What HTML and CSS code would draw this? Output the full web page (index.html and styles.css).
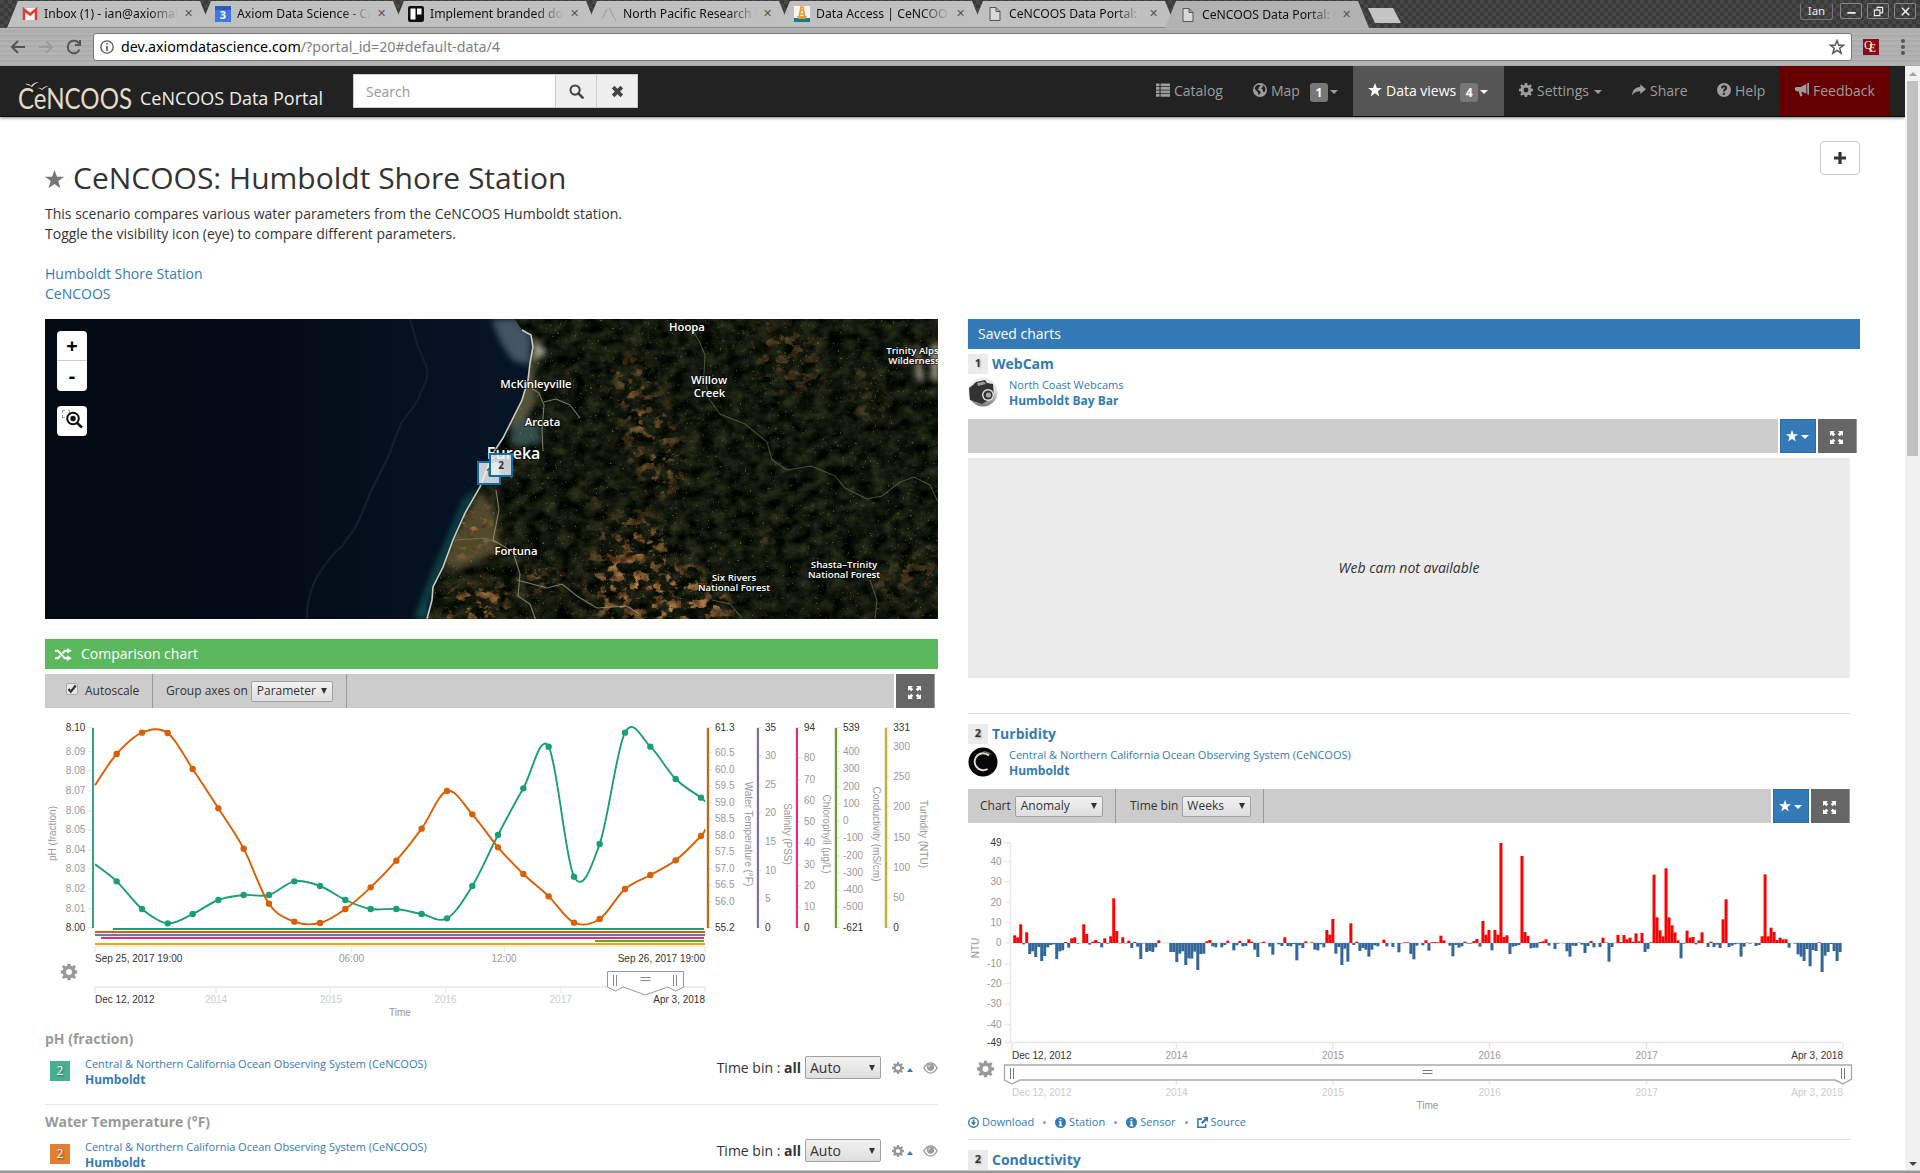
FILE: index.html
```html
<!DOCTYPE html>
<html lang="en">
<head>
<meta charset="utf-8">
<title>CeNCOOS Data Portal</title>
<link rel="stylesheet" href="styles.css">
</head>
<body>
<svg class="defs" width="0" height="0">
  <symbol id="star" viewBox="0 0 16 16"><path d="M8 0l2.100 5.700H16l-4.800 3.600L13 15.300 8 11.700l-5 3.600 1.800-6L0 5.700h5.900z"/></symbol>
  <symbol id="gear" viewBox="0 0 16 16"><path fill-rule="evenodd" d="M6.700 0h2.600l.4 2.200 1.500.6L13 1.500 14.600 3.100l-1.300 1.800.6 1.500 2.100.3v2.600l-2.100.4-.6 1.500 1.300 1.800L13 14.600l-1.800-1.300-1.500.6-.4 2.100H6.700l-.4-2.100-1.500-.6L3 14.600 1.400 13l1.300-1.800-.6-1.500L0 9.300V6.700l2.100-.3.6-1.500L1.400 3.100 3 1.500l1.800 1.300 1.500-.6zM8 5.200a2.800 2.800 0 100 5.600 2.800 2.800 0 000-5.600z"/></symbol>
  <symbol id="list" viewBox="0 0 16 16"><path d="M0 .5h4v3.300H0zM5.200.5H16v3.300H5.200zM0 4.500h4v3.300H0zM5.200 4.500H16v3.300H5.200zM0 8.500h4v3.300H0zM5.200 8.500H16v3.300H5.200zM0 12.500h4v3.300H0zM5.200 12.500H16v3.300H5.200z"/></symbol>
  <symbol id="globe" viewBox="0 0 16 16"><path fill-rule="evenodd" d="M8 0a8 8 0 100 16A8 8 0 008 0zM3.200 3.500L6 2l2.500.3L8 4 6.500 4.500 7 6 5 7.500l3 1.500 1 2-2.500 3-1-3.500L3 8 2 6zM10.500 2l2.800 2 1 3.500-1.300 3-1.500-.5-.5-2.500-1.500-1L10 5l1.500-.5z"/></symbol>
  <symbol id="share" viewBox="0 0 16 16"><path d="M9.500 1.500L16 7l-6.500 5.500V9.300C5 9.200 2.500 10.500 0 14 .5 8.500 3.500 5 9.500 4.700z"/></symbol>
  <symbol id="help" viewBox="0 0 16 16"><path fill-rule="evenodd" d="M8 0a8 8 0 100 16A8 8 0 008 0zM6.700 11h2.400v2.300H6.700zM4.600 6C4.700 4 6 2.700 8.100 2.700c2 0 3.500 1.200 3.500 3 0 1.200-.6 1.900-1.500 2.500-.8.5-1 .8-1 1.600H6.800c0-1.700.5-2.400 1.500-3 .6-.4.800-.6.800-1s-.3-.9-1-.9c-.8 0-1.100.5-1.200 1.300z"/></symbol>
  <symbol id="horn" viewBox="0 0 16 16"><path d="M14 0h2v13h-2zM13 1v11L7.500 10v.2l1 4.300-2.500.8-1.800-5.800H1.500L0 8V5.500L1.500 4.500h5z"/></symbol>
  <symbol id="full" viewBox="0 0 16 16"><path d="M0 0h6L4.200 1.800 6.500 4 4 6.500 1.800 4.200 0 6zM10 0h6v6l-1.800-1.800L12 6.500 9.500 4l2.300-2.200zM0 10l1.800 1.800L4 9.500 6.500 12l-2.300 2.200L6 16H0zM16 10v6h-6l1.800-1.800L9.500 12 12 9.500l2.200 2.300z"/></symbol>
  <symbol id="shuffle" viewBox="0 0 18 14"><path fill="none" stroke="currentColor" stroke-width="2.200" d="M0 3h3l7.500 8H14M0 11h3l2.500-2.700M8 5.700L10.500 3H14"/><path d="M13 0l5 3-5 3zM13 8l5 3-5 3z"/></symbol>
  <symbol id="search" viewBox="0 0 16 16"><circle cx="6.500" cy="6.500" r="4.900" fill="none" stroke="currentColor" stroke-width="2.200"/><path d="M10 10l4.500 4.500" stroke="currentColor" stroke-width="2.800" stroke-linecap="round"/></symbol>
  <symbol id="page" viewBox="0 0 11 14"><path fill="#d8d8d8" stroke="#555" d="M.5.5h6l4 4v9H.5zM6.500.5v4h4"/></symbol>
  <symbol id="eye" viewBox="0 0 16 13"><path fill="none" stroke="currentColor" stroke-width="1.500" d="M.8 6.500C3 2.700 5.500 1 8 1s5 1.700 7.200 5.500C13 10.200 10.500 12 8 12S3 10.200.8 6.500z"/><circle cx="8" cy="5.500" r="3.900"/><path d="M6 5.500A2 2 0 018 3.500" fill="none" stroke="#fff"/></symbol>
  <symbol id="down" viewBox="0 0 12 12"><circle cx="6" cy="6" r="5.200" fill="none" stroke="currentColor" stroke-width="1.500"/><path d="M5 2.800h2v3h1.800L6 9.200 3.200 5.800H5z"/></symbol>
  <symbol id="info" viewBox="0 0 12 12"><circle cx="6" cy="6" r="6"/><path fill="#fff" d="M5 1.800h2v1.700H5zM4.200 4.500H7v4h.9V10H4.200V8.500h.9V6h-.9z"/></symbol>
  <symbol id="source" viewBox="0 0 12 12"><path fill="none" stroke="currentColor" stroke-width="1.700" d="M5.500 2.300H1v8.900h8.400V7.500"/><path d="M6.500 0H12v5.500l-1.900-1.800-4 4-1.700-1.800 4-4z"/></symbol>
</svg>

<div class="tabs">
  <div class="tab"><svg class="fav" viewBox="0 0 16 16"><path fill="#f4f4f4" d="M1 2h14v12H1z"/><path d="M2 14V3.500l6 5 6-5V14" fill="none" stroke="#d93f35" stroke-width="2.500"/></svg><span class="tt">Inbox (1) - ian@axiomal</span><i class="tx">✕</i></div>
  <div class="tab"><svg class="fav" viewBox="0 0 16 16"><path fill="#3f78e0" d="M0 0h16v16H0z"/><path fill="#2c5bbd" d="M0 0h16v4H0z"/><text x="8" y="13" class="cal">3</text></svg><span class="tt">Axiom Data Science - Ca</span><i class="tx">✕</i></div>
  <div class="tab"><svg class="fav" viewBox="0 0 16 16"><rect width="16" height="16" rx="2" fill="#111"/><path fill="#fff" d="M2.500 2.500h5v11h-5zM9 2.500h4.500v6H9z"/></svg><span class="tt">Implement branded doc</span><i class="tx">✕</i></div>
  <div class="tab"><svg class="fav" viewBox="0 0 16 16"><path d="M1 13L6 3M8 2l7 13" fill="none" stroke="#999"/></svg><span class="tt">North Pacific Research B</span><i class="tx">✕</i></div>
  <div class="tab"><svg class="fav" viewBox="0 0 16 16"><path fill="#f4f4f4" d="M0 0h16v16H0z"/><path fill="#087f8c" d="M0 12h16v4H0z"/><path d="M5 12l2-11h2l2 11M5.500 8h5M6.500 4.500h3" fill="none" stroke="#e89a2c" stroke-width="1.600"/><path fill="#e89a2c" d="M3 10h10l-1.500 3h-7z"/></svg><span class="tt">Data Access | CeNCOO</span><i class="tx">✕</i></div>
  <div class="tab"><svg class="fav pg"><use href="#page"/></svg><span class="tt">CeNCOOS Data Portal: S</span><i class="tx">✕</i></div>
  <div class="tab on"><svg class="fav pg"><use href="#page"/></svg><span class="tt">CeNCOOS Data Portal: C</span><i class="tx">✕</i></div>
  <div class="newtab"></div>
  <div class="winbtns"><span class="ian">Ian</span><span class="wb"><svg viewBox="0 0 12 12"><path d="M1.500 7.500h9" stroke-width="2"/></svg></span><span class="wb"><svg viewBox="0 0 12 12"><path d="M1.500 4.500h6v6h-6zM4.500 4V1.500h6v6H8"/></svg></span><span class="wb"><svg viewBox="0 0 12 12"><path d="M2 2l8 8M10 2l-8 8" stroke-width="1.600"/></svg></span></div>
</div>
<div class="urlbar">
  <svg class="nv" viewBox="0 0 16 16"><path d="M15 8H2.500M8 2L2 8l6 6" stroke="#555"/></svg>
  <svg class="nv" viewBox="0 0 16 16"><path d="M1 8h12.500M8 2l6 6-6 6" stroke="#9a9a9a"/></svg>
  <svg class="nv" viewBox="0 0 16 16"><path d="M13.500 10.500A6 6 0 112.200 6 6 6 0 0113 4.500M14 1v5H9" stroke="#555"/></svg>
  <div class="url"><svg viewBox="0 0 14 14" width="14" height="14"><circle cx="7" cy="7" r="6.200" fill="none" stroke="#555" stroke-width="1.300"/><path d="M6.200 3h1.600v1.600H6.200zM6.200 6h1.600v5H6.200z" fill="#555"/></svg><span class="addr">dev.axiomdatascience.com<span>/?portal_id=20#default-data/4</span></span><svg class="bm" viewBox="0 0 16 16"><path d="M8 1.500l1.800 4.700h4.700l-3.800 3 1.500 5L8 11.300l-4.200 2.900 1.500-5-3.800-3h4.700z" fill="none" stroke="#555" stroke-width="1.400"/></svg></div>
  <div class="qe">Q<span>E</span></div>
  <div class="dots"><b></b><b></b><b></b></div>
</div>

<div class="window">
<div class="page">
  <nav class="navbar">
    <div class="logo"><svg viewBox="0 0 114 30" width="114" height="30"><path d="M7 3q4-1 6 2 3-4 8-4-4 1-7 5Q11 4 7 3zM19 7q3-1 5 1 2-3 7-3-4 1-7 4Q22 7 19 7z" fill="#ddd"/><text x="0" y="28" class="lg" textLength="114" lengthAdjust="spacingAndGlyphs">CeNCOOS</text></svg></div>
    <div class="brand">CeNCOOS Data Portal</div>
    <div class="search"><span class="inp">Search</span><span class="sb"><svg width="15" height="15"><use href="#search"/></svg></span><span class="sb"><svg width="13" height="13" viewBox="0 0 12 12"><path d="M2 2l8 8M10 2l-8 8" stroke="#444" stroke-width="3.400"/></svg></span></div>
    <div class="menu">
      <a class="w97"><svg class="ic"><use href="#list"/></svg>Catalog</a>
      <a class="w115"><svg class="ic"><use href="#globe"/></svg>Map<span class="bdg ml">1</span><i class="caret"></i></a>
      <a class="w151 act"><svg class="ic"><use href="#star"/></svg>Data views<span class="bdg">4</span><i class="caret"></i></a>
      <a class="w113"><svg class="ic"><use href="#gear"/></svg>Settings<i class="caret sp"></i></a>
      <a class="w85"><svg class="ic"><use href="#share"/></svg>Share</a>
      <a class="w78"><svg class="ic"><use href="#help"/></svg>Help</a>
      <a class="w110 fb"><svg class="ic"><use href="#horn"/></svg>Feedback</a>
    </div>
  </nav>

  <header class="head">
    <div class="intro">
      <h1><svg width="19" height="19"><use href="#star"/></svg>CeNCOOS: Humboldt Shore Station</h1>
      <p>This scenario compares various water parameters from the CeNCOOS Humboldt station.<br>Toggle the visibility icon (eye) to compare different parameters.<br><br><a>Humboldt Shore Station</a><br><a>CeNCOOS</a></p>
    </div>
    <div class="plus"><svg width="12" height="12" viewBox="0 0 12 12"><path d="M6 0v12M0 6h12" stroke="#333" stroke-width="3.200"/></svg></div>
  </header>

  <main class="cols">
    <section class="left">
      <div class="map">
        <svg width="893" height="300" viewBox="45 319 893 300">
          <defs>
            <linearGradient id="sea"><stop offset="0" stop-color="#030a14"/><stop offset=".25" stop-color="#040b16"/><stop offset=".4" stop-color="#05111f"/><stop offset=".55" stop-color="#061526"/></linearGradient>
            <filter id="terrain" x="0" y="0" width="1" height="1" color-interpolation-filters="sRGB"><feTurbulence type="fractalNoise" baseFrequency=".07 .09" numOctaves="5" seed="4"/><feColorMatrix values=".30 0 0 0 -.085  .28 0 0 0 -.052  .2 0 0 0 -.055  0 0 0 0 1"/></filter>
            <filter id="dry" x="0" y="0" width="1" height="1" color-interpolation-filters="sRGB"><feTurbulence type="fractalNoise" baseFrequency=".09 .11" numOctaves="5" seed="11"/><feColorMatrix values="0 .8 0 0 .08  0 .6 0 0 .03  0 .35 0 0 0  9 0 0 0 -4.600"/></filter>
            <filter id="fleck" x="0" y="0" width="1" height="1" color-interpolation-filters="sRGB"><feTurbulence type="fractalNoise" baseFrequency=".4" numOctaves="2" seed="7"/><feColorMatrix values="0 0 0 0 .6  0 0 0 0 .45  0 0 0 0 .28  10 0 0 0 -7"/></filter>
            <filter id="soft"><feGaussianBlur stdDeviation="10"/></filter>
            <filter id="soft2"><feGaussianBlur stdDeviation="3"/></filter>
            <clipPath id="land"><path d="M515 319l7 11 9 5 2 12-3 16-2 17-6 20-9 18-10 20-10 15-13 34-15 26-12 27-10 27-10 20-1 13-5 19H938V319z"/></clipPath>
            <mask id="drymask"><g filter="url(#soft)" fill="#fff"><path opacity=".7" d="M610 360l30-5 25 60 25 40-20 45-30-20-20-60z"/><path d="M600 530l40-20 40 50 45 30 10 40H600l-10-40z"/><path d="M465 500l20 5 12 40-50 10zM450 590l50-10 10 50H420zM525 565l35 5-5 25-25-5z"/><path opacity=".45" d="M740 325l70 0 20 60-60 10zM850 370h25l5 50-20 10zM850 580l90-40v50l-60 10zM755 530l20-5 10 30-15 5zM575 490l25-5 10 20-20 5z"/></g></mask>
          </defs>
          <rect x="45" y="319" width="893" height="300" fill="url(#sea)"/>
          <path d="M410 319Q414 333 418 347L426 365Q429 373 426 381L417 402 402 422Q396 435 390 453L370 493Q362 515 355 528L343 545Q330 556 320 572 307 592 307 619" fill="none" stroke="#131f2d" stroke-width="2.200"/>
          <path d="M492 319h25l14 18-1 28-16-4q-16-18-22-42z" fill="#6d7f8b" opacity=".6" filter="url(#soft2)"/>
          <path d="M480 487l-15 26-22 54-15 35v17h-14l20-50 30-70z" fill="#15605e" opacity=".7" filter="url(#soft2)"/>
          <g clip-path="url(#land)">
            <rect x="420" y="319" width="518" height="300" filter="url(#terrain)"/>
            <g filter="url(#soft2)"><path d="M532 350l4 50-10 20 12 20-30-14 10-40z" fill="#56533c"/><path d="M480 490l16 25 4 36-45 20-15-10z" fill="#4f4a2e"/><path d="M518 420l22 3v20l-20 3-12-5z" fill="#344f50"/><path d="M533 338l14 14-12 9z" fill="#aaa694"/><path d="M918 340l5 45-7-10zM932 345h6v35h-6z" fill="#bdb5a5"/></g>
            <g mask="url(#drymask)"><rect x="420" y="319" width="518" height="300" filter="url(#dry)"/></g>
            <rect x="420" y="319" width="518" height="300" filter="url(#fleck)" opacity=".55"/>
            <g fill="none" stroke="#a59c82" stroke-width="1.100" opacity=".75"><path d="M531 388l8 5 5 12-2 26 1 20M544 402l12-3 14 6 10 13"/><path d="M496 490l3 20-6 30 20 12 7 22-2 22 12 8 8 22M517 580l30 8 15-4 15 12 20 12 30-2 12 8"/><path d="M455 540l30-2 12 5M690 325l10 18 5 12-1 20 6 25 10 14 25 10 22 18 5 18 15 10 24-4 24 10 10 12 22 11 15-3 18-14 14-5 16 8 12 25 6 8" opacity=".55"/><path d="M712 600l18 4 12 14M870 580l7 20-2 19" opacity=".6"/></g>
          </g>
          <path d="M522 330l9 5 2 12-3 16-2 17-6 20-9 18-10 20-10 15-13 34-15 26-12 27-10 27-10 20-1 13-5 19" fill="none" stroke="#c8ccc4" stroke-width="1.600"/>
          <g class="ml">
            <text x="687" y="331">Hoopa</text><text x="536" y="387.500">McKinleyville</text><text x="542.500" y="425.500">Arcata</text><text x="513.500" y="459" class="big">Eureka</text><text x="516" y="555">Fortuna</text><text x="709" y="384">Willow</text><text x="709.500" y="396.500">Creek</text>
            <g class="sm"><text x="912.500" y="354">Trinity Alps</text><text x="914" y="363.500">Wilderness</text><text x="844" y="568">Shasta–Trinity</text><text x="844" y="577.500">National Forest</text><text x="734" y="581">Six Rivers</text><text x="734" y="590.500">National Forest</text></g>
          </g>
          <g class="mk"><rect x="478" y="462" width="22" height="22"/><text x="488.500" y="476" opacity=".8">1</text><rect x="490" y="454" width="22" height="22" class="top"/><text x="501" y="468.500">2</text></g>
        </svg>
        <div class="zoom"><b>+</b><b>-</b></div>
        <div class="zoom box"><svg width="30" height="30" viewBox="0 0 30 30"><path d="M5.500 7V4.500H8M11 4.500h1.500V7M5.500 9v2.500H8" fill="none" stroke="#999"/><circle cx="16" cy="12.500" r="5.800" fill="#fff" stroke="#111" stroke-width="2"/><circle cx="16" cy="12.500" r="2.700" fill="#111"/><path d="M20 17l5 4.500" stroke="#111" stroke-width="2.600"/></svg></div>
      </div>

      <div class="bar green"><svg width="17" height="13"><use href="#shuffle"/></svg>Comparison chart</div>
      <div class="tools wl">
        <div class="grey"><div class="cell c1"><span class="chk"><svg viewBox="0 0 12 12" width="12" height="12"><path d="M2.500 6l2.300 2.800L9.700 2.500" fill="none" stroke="#333" stroke-width="2.200"/></svg></span>Autoscale</div><div class="cell c2">Group axes on<span class="sel s82">Parameter<i></i></span></div></div>
        <div class="btn dark"><svg width="13" height="13"><use href="#full"/></svg></div>
      </div>
      <svg id="compare" class="chart" width="893" height="321" viewBox="45 708 893 321"></svg>

      <h4>pH (fraction)</h4>
      <div class="prow"><span class="num teal">2</span><div class="src"><a>Central &amp; Northern California Ocean Observing System (CeNCOOS)</a><a><b>Humboldt</b></a></div><div class="bin">Time bin : <b>all</b><span class="sel s76">Auto<i></i></span><svg class="g" width="12" height="12"><use href="#gear"/></svg><i class="up"></i><svg width="15" height="12"><use href="#eye"/></svg></div></div>
      <h4 class="next">Water Temperature (°F)</h4>
      <div class="prow"><span class="num org">2</span><div class="src"><a>Central &amp; Northern California Ocean Observing System (CeNCOOS)</a><a><b>Humboldt</b></a></div><div class="bin">Time bin : <b>all</b><span class="sel s76">Auto<i></i></span><svg class="g" width="12" height="12"><use href="#gear"/></svg><i class="up"></i><svg width="15" height="12"><use href="#eye"/></svg></div></div>
    </section>

    <section class="right">
      <div class="bar blue">Saved charts</div>
      <div class="title"><span>1</span><b>WebCam</b></div>
      <div class="who"><svg width="30" height="30" viewBox="0 0 30 30"><defs><linearGradient id="cg" x2="0" y2="1"><stop offset="0" stop-color="#eee"/><stop offset=".5" stop-color="#ddd"/><stop offset="1" stop-color="#777"/></linearGradient></defs><circle cx="15" cy="15" r="14.500" fill="url(#cg)"/><path d="M1 11l4-3 3-3 9-2 2 3 6 1 1 13-12 7L2 23z" fill="#333"/><path d="M9 6l7-1.500 2 2.500-8 2z" fill="#999"/><circle cx="20" cy="18" r="6" fill="#e4e4e4"/><circle cx="20" cy="18" r="4.600" fill="#333"/><circle cx="20.500" cy="18" r="2.600" fill="#aaa"/></svg><div class="src"><a>North Coast Webcams</a><a><b>Humboldt Bay Bar</b></a></div></div>
      <div class="tools ww"><div class="grey"></div><div class="btn bl"><svg width="12" height="12"><use href="#star"/></svg><i class="caret"></i></div><div class="btn dark"><svg width="13" height="13"><use href="#full"/></svg></div></div>
      <div class="cam">Web cam not available</div>
      <hr class="h1r">
      <div class="title"><span>2</span><b>Turbidity</b></div>
      <div class="who"><svg width="30" height="30" viewBox="0 0 30 30"><circle cx="15" cy="15" r="14.500" fill="#050505"/><path d="M21 8.500A8.500 8.500 0 1019.500 22" fill="none" stroke="#e6dfcc" stroke-width="1.900"/><path d="M14 4q7 0 10 4-5-2-10-4z" fill="#777"/></svg><div class="src"><a>Central &amp; Northern California Ocean Observing System (CeNCOOS)</a><a><b>Humboldt</b></a></div></div>
      <div class="tools wt"><div class="grey"><div class="cell c3">Chart<span class="sel s88">Anomaly<i></i></span></div><div class="cell c4">Time bin<span class="sel s69">Weeks<i></i></span></div></div><div class="btn bl"><svg width="12" height="12"><use href="#star"/></svg><i class="caret"></i></div><div class="btn dark"><svg width="13" height="13"><use href="#full"/></svg></div></div>
      <svg id="turb" class="chart" width="892" height="290" viewBox="968 823 892 290"></svg>
      <div class="links"><a><svg><use href="#down"/></svg>Download</a><i></i><a><svg><use href="#info"/></svg>Station</a><i></i><a><svg><use href="#info"/></svg>Sensor</a><i></i><a><svg><use href="#source"/></svg>Source</a></div>
      <hr class="h2r">
      <div class="title"><span>2</span><b>Conductivity</b></div>
    </section>
  </main>
</div>
<div class="scroll"><i class="su"></i><div class="thumb"></div><i class="sd"></i></div>
</div>
<div class="edge"></div>
<script src="script.js"></script>
</body>
</html>
```
FILE: styles.css
```css
* { box-sizing: border-box; }
html, body { margin: 0; height: 1173px; overflow: hidden; }
body { display: flex; flex-direction: column; font: 14px/20px "Open Sans", "Noto Sans", sans-serif; color: #333; background: #fff; }
svg { fill: currentColor; flex: none; }
.defs { position: absolute; }
a { color: #337ab7; text-decoration: none; }
i { font-style: normal; }

.tabs { flex: none; height: 28px; display: flex; padding: 1px 7px 0 7px; background: repeating-conic-gradient(#3a3a3a 0 25%, #484848 0 50%) 0 0/8px 8px; font: 12.200px/26px "Noto Sans", sans-serif; color: #111; }
.tab { width: 205px; margin-right: -12px; height: 27px; padding: 0 0 0 15px; display: flex; align-items: center; background: #c0c0c0; clip-path: polygon(11px 0, 193px 0, 204px 100%, 0 100%); border-bottom: 1px solid #888; flex: none; }
.tab.on { background: #b2b2b2; border: 0; }
.fav { width: 16px; height: 16px; margin-right: 6px; }
.fav.pg { height: 14px; }
.cal { font: bold 11px "Open Sans", sans-serif; fill: #fff; text-anchor: middle; }
.tt { width: 138px; flex: none; white-space: nowrap; -webkit-mask: linear-gradient(90deg, #000 105px, transparent 134px); mask: linear-gradient(90deg, #000 105px, transparent 134px); }
.tx { font: bold 11px/26px "DejaVu Sans", sans-serif; color: #555; margin-left: 2px; }
.newtab { width: 33px; height: 15px; margin: 7px 0 0 10px; background: #c4c4c4; clip-path: polygon(0 0, 25px 0, 33px 100%, 7px 100%); }
.winbtns { display: flex; gap: 5px; margin-left: auto; padding-top: 2px; margin-right: -3px; color: #eee; }
.ian { width: 33px; height: 17px; border: 1px solid #777; border-top: 0; border-radius: 3px; font-size: 11.500px; line-height: 15px; text-align: center; margin-right: 2px; }
.wb { width: 22px; height: 16px; border: 1px solid #888; border-radius: 2px; display: flex; align-items: center; justify-content: center; }
.wb svg { width: 11px; fill: none; stroke: #eee; stroke-width: 1.200; }

.urlbar { flex: none; height: 38px; display: flex; align-items: center; padding-left: 10px; background: repeating-linear-gradient(#b4b4b4 0 2px, #a9a9a9 2px 3px, #afafaf 3px 5px); }
.nv { width: 16px; height: 16px; margin-right: 12px; fill: none; stroke-width: 2; }
.nv:nth-child(3) { margin-right: 11px; }
.url { width: 1759px; height: 28px; display: flex; align-items: center; background: #fff; border: 1px solid #777; border-radius: 3px; padding: 0 6px; font: 14.260px/24px "Noto Sans", sans-serif; color: #000; }
.addr { margin: -1px 0 0 7px; }
.addr span { color: #808080; }
.bm { width: 16px; margin-left: auto; }
.qe { width: 16px; height: 16px; margin-left: 11px; background: #8b0a1a; color: #f3e7d0; font: 12px/12px "Liberation Serif", serif; padding-left: 1px; white-space: nowrap; }
.qe span { margin-left: -4px; vertical-align: -3px; line-height: 1px; }
.dots { margin-left: 22px; display: flex; flex-direction: column; gap: 2px; }
.dots b { width: 4px; height: 4px; border-radius: 50%; background: #555; }

.window { flex: 1; min-height: 0; display: flex; }
.page { width: 1905px; overflow: hidden; }
.scroll { width: 15px; background: #f1f1f1; display: flex; flex-direction: column; align-items: center; }
.thumb { width: 11px; height: 375px; background: #c1c1c1; }
.su, .sd { border: 4px solid transparent; }
.su { border-bottom: 4px solid #a3a3a3; border-top: 0; margin: 6px 0 5px; }
.sd { border-top: 4px solid #444; border-bottom: 0; margin-top: auto; margin-bottom: 4px; }
.edge { flex: none; height: 3px; background: linear-gradient(#c8c8c8 0 1px, #999 1px); }

.navbar { height: 51px; display: flex; background: #222; border-bottom: 1px solid #080808; box-shadow: 0 1px 3px rgba(0,0,0,.5); padding-left: 18px; color: #9d9d9d; }
.logo { padding-top: 15px; width: 122px; }
.lg { font: 28px "Lato", sans-serif; fill: #e3dcc8; }
.brand { width: 213px; font-size: 18px; line-height: 20px; padding-top: 22px; color: #eee; white-space: nowrap; }
.search { display: flex; margin-top: 8px; height: 34px; }
.search span { border: 1px solid #ccc; }
.inp { width: 203px; background: #fff; color: #999; padding: 7px 12px 5px; }
.sb { width: 42px; margin-left: -1px; background: #eee; color: #444; display: flex; align-items: center; justify-content: center; }
.menu { margin-left: auto; margin-right: 15px; display: flex; }
.menu a { color: #9d9d9d; height: 50px; display: flex; align-items: center; padding-left: 15px; white-space: nowrap; }
.ic { width: 14px; height: 14px; margin-right: 4px; margin-top: -2px; }
.w97 { width: 97px; } .w115 { width: 115px; } .w151 { width: 151px; } .w113 { width: 113px; } .w85 { width: 85px; } .w78 { width: 78px; } .w110 { width: 110px; }
.menu .act { background: #555; color: #fff; }
.menu .fb { background: #600; }
.fb .ic { width: 16px; margin-left: -1px; margin-right: 3px; }
.bdg { background: #777; color: #fff; font: bold 12px/19px "Open Sans", sans-serif; width: 18px; text-align: center; border-radius: 3px; margin: 3px 2px 0 4px; }
.bdg.ml { margin-left: 10px; }
.caret { border: 4px solid transparent; border-top-color: currentColor; border-bottom: 0; margin-top: 1px; }
.caret.sp { margin-left: 5px; }

.head { display: flex; justify-content: space-between; padding: 0 45px; height: 202px; }
.intro { padding-top: 44px; }
h1 { font-weight: 400; font-size: 30px; line-height: 33px; margin: 0 0 10px; white-space: nowrap; }
h1 svg { color: #777; margin-right: 9px; }
p { margin: 0; }
.plus { width: 40px; height: 34px; margin-top: 24px; border: 1px solid #ccc; border-radius: 4px; display: flex; align-items: center; justify-content: center; }
.cols { display: grid; grid-template-columns: 893px 892px; gap: 30px; padding-left: 45px; }
.left, .right { min-width: 0; }
.left > svg, .right > svg { display: block; }

.map { position: relative; height: 300px; margin-bottom: 20px; overflow: hidden; }
.zoom { position: absolute; left: 12px; top: 12px; width: 30px; background: #fff; border-radius: 4px; color: #000; }
.zoom.box { top: 87px; height: 30px; }
.zoom b { display: block; height: 30px; font: bold 20px/29px "Open Sans", sans-serif; text-align: center; }
.zoom b:first-child { border-bottom: 1px solid #ccc; }
.ml text { font: 600 11.300px "Open Sans", sans-serif; fill: #fff; text-anchor: middle; paint-order: stroke; stroke: rgba(0,0,0,.45); stroke-width: 2px; }
.ml text.big { font-size: 16px; }
.ml .sm text { font-size: 9.700px; }
.mk rect { fill: rgba(235,240,243,.85); stroke: #0a6ea8; stroke-width: 2; }
.mk text { font: bold 10px "Open Sans", sans-serif; fill: #333; text-anchor: middle; }

.bar { height: 30px; color: #fff; display: flex; align-items: center; padding-left: 10px; margin-bottom: 5px; }
.green { background: #5cb85c; }
.green svg { margin-right: 9px; }
.blue { background: #337ab7; }
.tools { display: flex; gap: 2px; height: 34px; font-size: 12px; }
.wl { width: 890px; } .ww { width: 889px; } .wt { width: 882px; }
.grey { flex: 1; background: #ccc; display: flex; }
.cell { border-right: 1px solid #999; display: flex; align-items: center; white-space: nowrap; }
.c1 { width: 108px; padding-left: 21px; } .c2 { width: 194px; padding-left: 13px; }
.c3 { width: 148px; padding-left: 12px; } .c4 { width: 148px; padding-left: 14px; }
.chk { width: 12px; height: 12px; border: 1px solid #aaa; border-radius: 2px; background: #e8e8e8; margin: -4px 7px 0 0; display: flex; align-items: center; justify-content: center; }
.sel { height: 21px; border: 1px solid #a0a0a0; border-radius: 2px; background: linear-gradient(#f2f2f2, #dedede); display: inline-flex; align-items: center; justify-content: space-between; padding: 0 5px 0 5px; margin-left: 4px; }
.sel i { border: 3.500px solid transparent; border-top: 6px solid #333; border-bottom: 0; }
.s82 { width: 82px; margin-left: 3px; } .s76 { width: 76px; height: 23px; padding-left: 4px; } .s88 { width: 88px; } .s69 { width: 69px; padding-left: 4px; }
.btn { display: flex; align-items: center; justify-content: center; color: #fff; }
.dark { width: 39px; background: #666; padding: 2px 1px 0 0; border-right: 1px solid #999; }
.bl { width: 36px; background: #337ab7; border: 1px solid #2e6da4; gap: 3px; padding-right: 1px; }
.chart text { font: 10px "Liberation Sans", sans-serif; fill: #999; }
.chart text.k { fill: #333; }
.chart text.f { fill: #ccc; }

h4 { margin: 0; font: bold 14px/20px "Open Sans", sans-serif; color: #999; }
h4.next { margin-top: 7px; }
.prow { height: 56px; border-bottom: 1px solid #e8e8e8; display: flex; padding-top: 7px; }
.num { width: 20px; height: 20px; margin: 5px 15px 0 5px; color: #fff; font-size: 12px; line-height: 19px; text-align: center; text-shadow: 1px 1px 2px rgba(0,0,0,.5); }
.teal { background: #48b08f; } .org { background: #e17f33; }
.src { display: flex; flex-direction: column; font-size: 11px; line-height: 16px; white-space: nowrap; }
.src b { font-size: 12px; }
.bin { margin-left: auto; height: 23px; display: flex; align-items: center; white-space: pre; }
.bin .g { margin: 0 3px 0 11px; }
.bin svg { color: #999; }
.up { border: 3.500px solid transparent; border-bottom: 4px solid #337ab7; border-top: 0; margin: 5px 10px 0 0; }

.title { display: flex; height: 20px; }
.title span { width: 20px; background: #ebebeb; font: bold 11px/18px "Open Sans", sans-serif; text-align: center; text-shadow: 1px 1px 2px rgba(0,0,0,.3); margin-right: 4px; }
.title b { color: #337ab7; }
.who { height: 45px; display: flex; padding-top: 3px; gap: 11px; }
.cam { width: 882px; height: 220px; margin: 5px 0 35px; background: #ebebeb; font-style: italic; display: flex; align-items: center; justify-content: center; }
hr { border: 0; height: 1px; background: #ddd; margin: 0; width: 882px; }
.h1r { margin-bottom: 10px; }
.h2r { margin: 8px 0 10px; }
.links { display: flex; align-items: center; font-size: 11px; line-height: 18px; height: 18px; }
.links a { display: flex; align-items: center; gap: 3px; }
.links svg { width: 11px; height: 11px; }
.links i { width: 3px; height: 3px; border-radius: 50%; background: #999; margin: 0 9px; }
```
FILE: script.js
```js
const NS = 'http://www.w3.org/2000/svg';
function add(svg, tag, attrs, text) {
  const e = document.createElementNS(NS, tag);
  for (const k in attrs) e.setAttribute(k, attrs[k]);
  if (text !== undefined) e.textContent = text;
  svg.appendChild(e);
  return e;
}
const label = (s, x, y, t, anchor, cls) => add(s, 'text', { x, y, 'text-anchor': anchor, class: cls || '' }, t);
const line = (s, d, stroke, w) => add(s, 'path', { d, stroke, 'stroke-width': w, fill: 'none' });
const LIGHT = '#e8e8e8';

// Comparison chart
const cmp = document.getElementById('compare');
const px = v => 30 + v / 3, py = v => 630 + v / 3;
const xs = [195, 260, 336, 413, 488, 565, 641, 717, 793, 870, 946, 1022, 1099, 1175, 1251, 1327, 1404, 1480, 1556, 1632, 1709, 1785, 1861, 1937, 2013, 2025];
const ph = [703, 754, 837, 880, 852, 810, 795, 795, 754, 768, 810, 837, 837, 852, 865, 768, 615, 475, 350, 740, 642, 308, 350, 447, 503, 515];
const temp = [466, 372, 308, 309, 417, 535, 656, 821, 875, 879, 837, 772, 692, 596, 483, 553, 652, 732, 799, 878, 867, 777, 735, 691, 618, 598];
function series(ys, color) {
  const p = xs.map((x, i) => [px(x), py(ys[i])]);
  let d = `M${p[0]}`;
  for (let i = 0; i < p.length - 1; i++) {
    const a = p[i - 1] || p[i], b = p[i], c = p[i + 1], e = p[i + 2] || c;
    d += `C${b[0] + (c[0] - a[0]) / 6},${b[1] + (c[1] - a[1]) / 6} ${c[0] - (e[0] - b[0]) / 6},${c[1] - (e[1] - b[1]) / 6} ${c}`;
  }
  line(cmp, d, color, 1.9);
  p.slice(1, -1).forEach(q => add(cmp, 'circle', { cx: q[0], cy: q[1], r: 3.2, fill: color }));
}
series(ph, '#1b9e77');
series(temp, '#d95f02');
[[896, 249, 2022, '#1b9e77'], [906, 195, 2025, '#d95f02'], [915, 195, 2025, '#7570b3'], [924, 213, 2022, '#e7298a'], [933, 1695, 2022, '#66a61e'], [942, 195, 2025, '#e6ab02']]
  .forEach(([y, a, b, c]) => line(cmp, `M${px(a)} ${Math.round(py(y))}H${px(b)}`, c, 2));
line(cmp, 'M95 946.5H705M95 946v6M351.500 946v6M504.500 946v6M705 946v6M95 987H705M95 987v6M216 987v6M330.500 987v6M445.500 987v6M561 987v6M705 987v6', LIGHT, 1.3);
label(cmp, 95, 962, 'Sep 25, 2017 19:00', 'start', 'k');
label(cmp, 351.5, 962, '06:00', 'middle');
label(cmp, 504, 962, '12:00', 'middle');
label(cmp, 705, 962, 'Sep 26, 2017 19:00', 'end', 'k');
add(cmp, 'path', { d: 'M607.500 971.500H683.500V987L675.700 991 667.700 987 645.300 995 623.300 987 615.300 991 607.500 987Z', fill: '#fff', stroke: '#999' });
line(cmp, 'M613.500 975v11M616.500 975v11M673.500 975v11M676.500 975v11M640.500 977.500h10M640.500 980.500h10', '#888', 1);
label(cmp, 95, 1003, 'Dec 12, 2012', 'start', 'k');
[[216, 2014], [331, 2015], [445.5, 2016], [560.7, 2017]].forEach(([x, t]) => label(cmp, x, 1003, t, 'middle', 'f'));
label(cmp, 705, 1003, 'Apr 3, 2018', 'end', 'k');
label(cmp, 400, 1016, 'Time', 'middle');
const useGear = (s, x, y) => add(s, 'use', { href: '#gear', x, y, width: 17, height: 17, fill: '#999' });
useGear(cmp, 60.5, 963.5);

[['8.10', 291], ['8.09', 363], ['8.08', 420], ['8.07', 481], ['8.06', 541], ['8.05', 599], ['8.04', 658], ['8.03', 715], ['8.02', 775], ['8.01', 834], ['8.00', 891]]
  .forEach(([t, y], i) => { label(cmp, 85.3, py(y) + 3.8, t, 'end', i % 10 ? '' : 'k'); line(cmp, `M88 ${py(y + 2)}h6`, LIGHT, 1.2); });
line(cmp, 'M93 728V928', '#1b9e77', 1.8);
const rot = (s, x, y, a, t) => add(s, 'text', { transform: `translate(${x} ${y}) rotate(${a})`, 'text-anchor': 'middle' }, t);
rot(cmp, 56, 833.5, -90, 'pH (fraction)');

[
  [708, 715, '#d95f02', 745, 'Water Temperature (°F)', [['61.3', 291], ['60.5', 366], ['60.0', 417], ['59.5', 466], ['59.0', 516], ['58.5', 565], ['58.0', 615], ['57.5', 664], ['57.0', 714], ['56.5', 763], ['56.0', 814], ['55.2', 891]]],
  [758, 765, '#7570b3', 784, 'Salinity (PSS)', [['35', 291], ['30', 375], ['25', 463], ['20', 547], ['15', 634], ['10', 720], ['5', 805], ['0', 891]]],
  [797, 804, '#e7298a', 823, 'Chlorophyll (µg/L)', [['94', 291], ['80', 381], ['70', 447], ['60', 511], ['50', 574], ['40', 637], ['30', 703], ['20', 766], ['10', 829], ['0', 891]]],
  [836, 843, '#66a61e', 873, 'Conductivity (mS/cm)', [['539', 291], ['400', 363], ['300', 414], ['200', 468], ['100', 520], ['0', 571], ['-100', 622], ['-200', 676], ['-300', 727], ['-400', 778], ['-500', 829], ['-621', 891]]],
  [886, 893.3, '#e6ab02', 920, 'Turbidity (NTU)', [['331', 291], ['300', 348], ['250', 438], ['200', 528], ['150', 621], ['100', 712], ['50', 802], ['0', 891]]]
].forEach(([x, lx, c, tx, name, ticks]) => {
  line(cmp, `M${x - 1.5} 728V928`, LIGHT, 1.5);
  ticks.forEach(([t, y], i) => {
    line(cmp, `M${x - 1} ${py(y + 2)}h5`, LIGHT, 1.2);
    label(cmp, lx, py(y) + 3.8, t, 'start', i === 0 || i === ticks.length - 1 ? 'k' : '');
  });
  line(cmp, `M${x} 728V928`, c, 2);
  rot(cmp, tx, 834, 90, name);
});

// Weekly turbidity anomaly; heights in thirds of a pixel
const weeks = [23,17,56,-4,32,-33,-25,-42,-12,-54,-39,-13,-6,-4,-48,-25,-22,3,-14,14,17,-2,0,56,27,-5,4,9,3,-13,14,-2,20,134,36,-1,17,-1,7,-15,3,-11,-48,-1,-27,-24,-27,-13,8,0,0,0,-27,-27,-57,-32,-25,-66,-46,-47,-26,-81,-33,-32,5,9,-10,-13,0,-13,-6,7,0,-22,-7,6,-10,-9,11,4,-20,-42,1,4,0,-11,-35,0,-4,-9,17,-9,-10,-3,-52,-7,-15,5,0,2,-20,-22,-4,-13,39,25,72,-32,-12,-66,-17,-56,59,-6,4,-24,-15,-20,-41,-20,-7,-10,0,10,-10,0,-12,0,-28,-1,2,2,-33,-49,-8,0,-7,8,-23,2,3,2,22,8,0,-8,-40,-6,-14,-10,4,-2,-2,6,12,-11,66,25,39,-22,39,25,300,18,23,-33,-11,-9,-6,261,33,21,-16,-14,-14,3,5,11,-8,0,-18,-2,0,-1,-25,-41,-8,-9,1,-5,-30,-9,6,-13,0,-12,16,1,-56,-12,0,24,3,24,11,16,4,29,5,30,-27,-18,2,205,77,38,20,224,77,53,32,8,-46,-2,37,16,18,-4,8,32,0,-12,4,-12,-5,-15,71,131,-12,-8,-4,-2,-41,-11,1,-2,0,-9,-6,20,206,20,46,33,9,16,11,11,-14,0,-2,-34,-41,-54,-18,-70,-21,-24,2,-87,-38,-27,-3,-24,-54,-27];
const tb = document.getElementById('turb');
line(tb, 'M1012 943H1842', '#ddd', 1);
weeks.forEach((v, i) => {
  if (!v) return;
  const h = Math.abs(v) / 3;
  add(tb, 'rect', { x: 1013.2 + i * 3.0015, y: v > 0 ? 943 - h : 943, width: 3, height: h, fill: v > 0 ? '#f00' : '#336699' });
});
line(tb, 'M1004 843h6.500V1042.500h-6.500', LIGHT, 1.5);
[['49', 842], ['40', 861], ['30', 881], ['20', 902], ['10', 922], ['0', 942.3], ['-10', 963], ['-20', 983], ['-30', 1003], ['-40', 1024], ['-49', 1042]]
  .forEach(([t, y], i) => { label(tb, 1001.5, y + 3.8, t, 'end', i % 10 ? '' : 'k'); line(tb, `M1004 ${y + .7}h6`, LIGHT, 1); });
rot(tb, 979, 948, -90, 'NTU');
line(tb, 'M1012 1042.500H1843M1012 1043v6M1176.500 1043v6M1333 1043v6M1489.500 1043v6M1646.500 1043v6M1843 1043v6M1176.500 1080v5M1333 1080v5M1489.500 1080v5M1646.500 1080v5', LIGHT, 1.5);
[[1059, 'k', ''], [1096, 'f', 'f']].forEach(([y, a, b]) => {
  label(tb, 1012, y, 'Dec 12, 2012', 'start', a);
  [[1176.5, 2014], [1333, 2015], [1489.7, 2016], [1646.7, 2017]].forEach(([x, t]) => label(tb, x, y, t, 'middle', b));
  label(tb, 1843, y, 'Apr 3, 2018', 'end', a);
});
add(tb, 'path', { d: 'M1004.500 1065H1851.500V1079L1843 1084 1835 1080H1020L1012 1084 1004.500 1080Z', fill: '#fff', stroke: '#aaa', 'stroke-width': 1.4 });
line(tb, 'M1010.500 1068v11M1013.500 1068v11M1841.500 1068v11M1844.500 1068v11M1422.500 1070.500h10M1422.500 1073.500h10', '#777', 1);
label(tb, 1427.5, 1109, 'Time', 'middle');
useGear(tb, 977, 1060.5);
```
